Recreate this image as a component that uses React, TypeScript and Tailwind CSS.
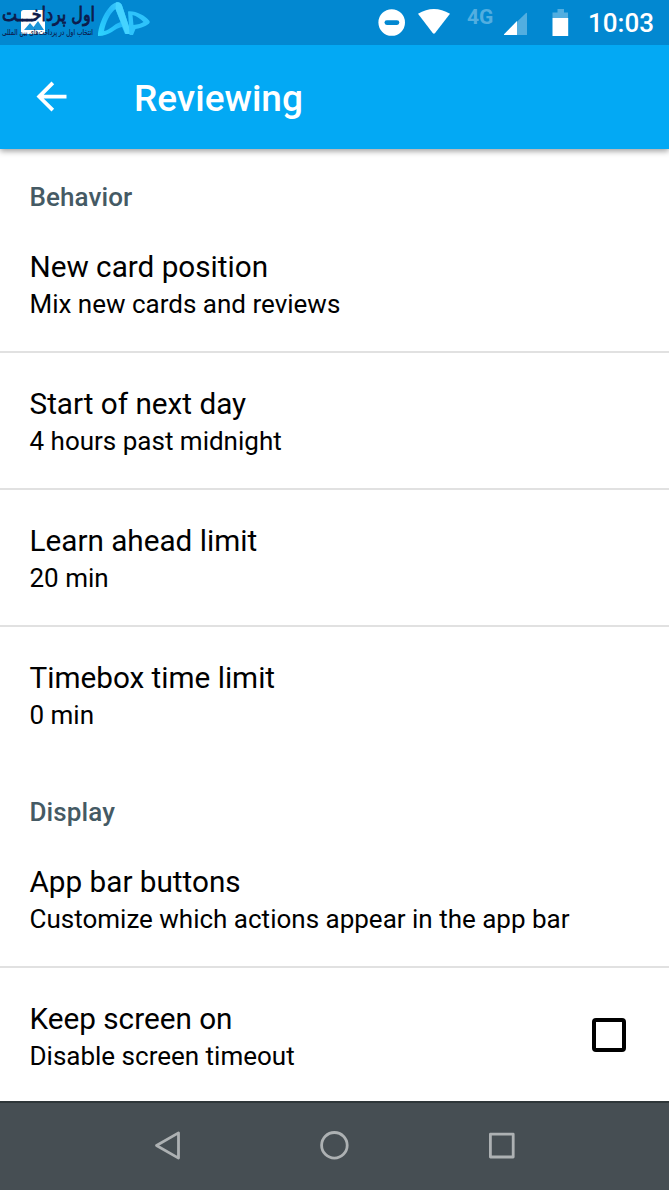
type Preference = {
  title: string;
  summary: string;
  checkbox?: boolean;
};

const sections: { title: string; items: Preference[] }[] = [
  {
    title: 'Behavior',
    items: [
      { title: 'New card position', summary: 'Mix new cards and reviews' },
      { title: 'Start of next day', summary: '4 hours past midnight' },
      { title: 'Learn ahead limit', summary: '20 min' },
      { title: 'Timebox time limit', summary: '0 min' },
    ],
  },
  {
    title: 'Display',
    items: [
      { title: 'App bar buttons', summary: 'Customize which actions appear in the app bar' },
      { title: 'Keep screen on', summary: 'Disable screen timeout', checkbox: true },
    ],
  },
];

function BrandLogo() {
  return (
    <svg className="h-[45px] w-[160px]" viewBox="0 0 160 45">
      <defs>
        <linearGradient id="ribbon" x1="0" y1="1" x2="1" y2="0">
          <stop offset="0" stopColor="#2fd6ff" />
          <stop offset="0.5" stopColor="#22b8f8" />
          <stop offset="1" stopColor="#4fd8ff" />
        </linearGradient>
      </defs>
      {/* Gallery notification */}
      <rect x="21" y="10" width="24" height="24" rx="2.5" fill="#fff" />
      <path d="M24 30l6-7 3.5 4 4.5-6 6 9z" fill="#1994d8" />
      {/* Word mark */}
      <g fill="#0d1b4c" stroke="#0d1b4c" fontFamily="'DejaVu Sans', sans-serif" direction="rtl">
        <text x="95" y="20.5" fontSize="20" strokeWidth="0.9" textLength="93" lengthAdjust="spacingAndGlyphs">
          اول پرداخـــت
        </text>
        <text x="93" y="35" fontSize="8.5" strokeWidth="0.15" textLength="91" lengthAdjust="spacingAndGlyphs">
          انتخاب اول در پرداخت‌های بین المللی
        </text>
      </g>
      {/* Ribbon mark */}
      <path
        d="M98 36C98 25 107 5 116 2.5c3-1 5 .5 6 3L131.500 34h-6.500l-3-7c-7 1-12 9-24 9zM104 31c6-1 10-7 16.500-9L115.500 9C110 13 105.500 23 104 31z"
        fill="url(#ribbon)"
        fillRule="evenodd"
      />
      <path d="M116 2.500c3-1 5 .5 6 3L131.500 34h-6L115.500 9z" fill="#45d3ff" />
      <path
        d="M128 11.500c7-1 17 4 21.500 9.500 2 3-7 7-14 8l-2.500 6h-3.500zM132.500 15l1 10c4-.5 8-1.500 10-3-3-3-7-6-11-7z"
        fill="#2ec3fb"
        fillRule="evenodd"
      />
    </svg>
  );
}

function StatusIcons() {
  return (
    <svg className="h-[45px] w-[210px]" viewBox="370 0 210 45" fill="#fff">
      <circle cx="391.7" cy="22.5" r="13.3" />
      <rect x="384.5" y="20.2" width="14.8" height="4.7" rx="2.3" fill="#0288d1" />
      <path d="M418 13.8q15.8-9.6 32 0L435.1 33q-1.2 1.4-2.4 0z" />
      <text x="467" y="24" fontFamily="Roboto, sans-serif" fontSize="21" fontWeight="700" fill="#52aee0">
        4G
      </text>
      <path d="M527 35V13.5q0-1.3-1-.4L504.5 34q-.9 1 .3 1z" fill="#52aee0" />
      <path d="M517 35V21L504.3 34q-.9 1 .3 1z" />
      <path d="M552.5 18v-5.500h5V9h6.500v3.500h4V18z" fill="#52aee0" />
      <rect x="552.5" y="18" width="15.7" height="18" />
    </svg>
  );
}

function StatusBar() {
  return (
    <div className="relative z-20 flex h-[45px] shrink-0 items-start bg-[#0288d1]">
      <BrandLogo />
      <div className="ml-auto flex items-start">
        <StatusIcons />
        <span className="w-[89px] pl-2 text-[26px] leading-[46px] font-medium text-white">10:03</span>
      </div>
    </div>
  );
}

function AppBar() {
  return (
    <header className="relative z-10 flex h-[104px] shrink-0 items-center bg-[#03a9f4] shadow-[0_2px_6px_rgba(0,0,0,0.4)]">
      <button aria-label="Back" className="mb-[2px] ml-[29px] h-[45px] w-[45px]">
        <svg viewBox="0 0 24 24" fill="#fff">
          <path d="M20 11H7.83l5.59-5.59L12 4l-8 8 8 8 1.41-1.41L7.83 13H20z" />
        </svg>
      </button>
      <h1 className="ml-[60px] pt-[3px] text-[37px] leading-none font-medium text-white">Reviewing</h1>
    </header>
  );
}

function PreferenceRow({ title, summary, checkbox }: Preference) {
  return (
    <li className="flex h-[137px] items-center justify-between border-b-2 border-[#e1e1e1] pr-[43px] pl-[29.5px] last:border-transparent">
      <div className="pt-[3px]">
        <p className="text-[29.7px] leading-[37px]">{title}</p>
        <p className="text-[26px] leading-[38px]">{summary}</p>
      </div>
      {checkbox && (
        <span
          role="checkbox"
          aria-checked="false"
          className="mb-[2px] h-[34px] w-[34px] rounded-[4px] border-4 border-black"
        />
      )}
    </li>
  );
}

function NavigationBar() {
  return (
    <nav className="flex h-[89px] shrink-0 items-center justify-center border-t-2 border-[#2e3639] bg-[#464e53]">
      <svg className="h-[87px] w-full" viewBox="0 1103 669 87" fill="none" stroke="#adb1b3" strokeWidth="2.8" strokeLinejoin="round">
        <path d="M156.5 1145.5l22-12.600v25.200z" />
        <circle cx="334.4" cy="1145.3" r="12.8" />
        <rect x="490.4" y="1134.2" width="22.8" height="22.8" />
      </svg>
    </nav>
  );
}

export default function App() {
  return (
    <div className="flex h-[1190px] w-[669px] flex-col overflow-hidden bg-white font-[Roboto,sans-serif] text-black">
      <StatusBar />
      <AppBar />
      <main className="min-h-0 flex-1 overflow-hidden">
        {sections.map((section) => (
          <section key={section.title}>
            <h2 className="h-[67px] pt-8 pl-[29.5px] text-[26px] leading-[32px] font-medium tracking-[0.1px] text-[#455a64]">
              {section.title}
            </h2>
            <ul>
              {section.items.map((item) => (
                <PreferenceRow key={item.title} {...item} />
              ))}
            </ul>
          </section>
        ))}
      </main>
      <NavigationBar />
    </div>
  );
}
